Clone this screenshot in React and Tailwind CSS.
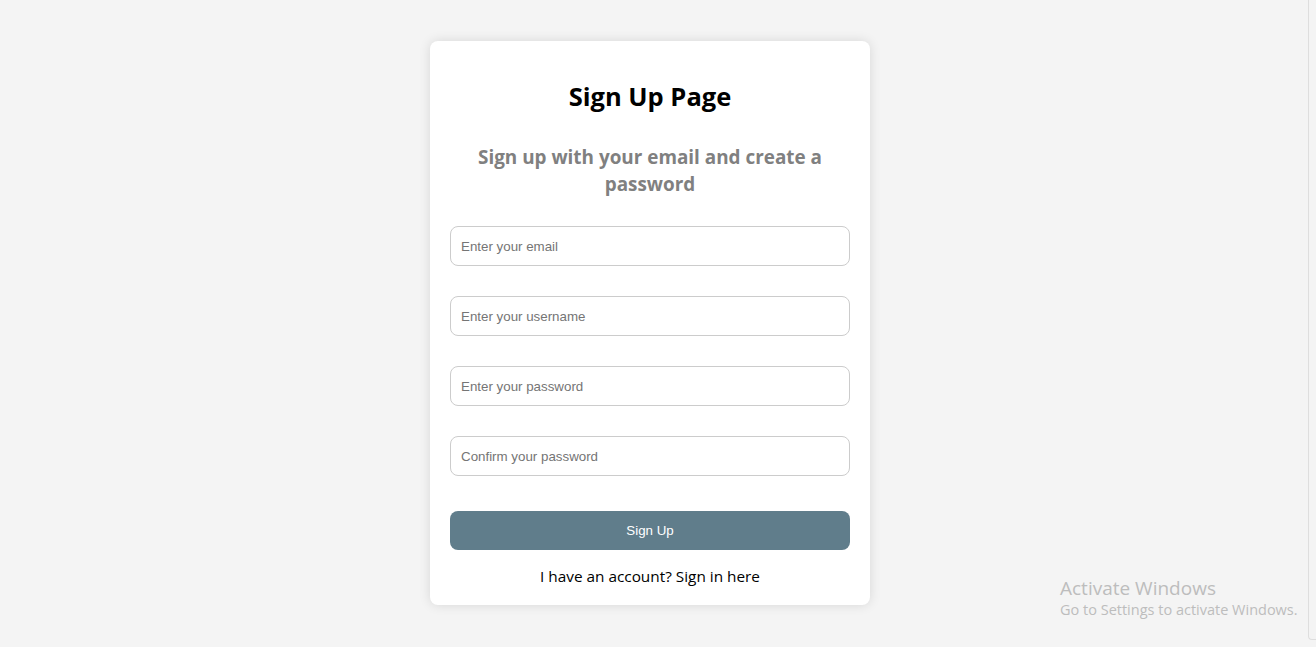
import React, { useState } from 'react';

const Field = ({ type, placeholder, value, onChange }) => (
  <input
    type={type}
    placeholder={placeholder}
    value={value}
    onChange={onChange}
    className="block w-full h-[40px] px-[10px] border border-[#cccccc] rounded-[8px] bg-white text-[13.33px] text-black placeholder:text-[#757575] outline-none font-['Liberation_Sans',Arial,sans-serif]"
  />
);

const App = () => {
  const [form, setForm] = useState({ email: '', username: '', password: '', confirm: '' });

  const update = (key) => (e) => setForm({ ...form, [key]: e.target.value });

  return (
    <div className="relative flex w-full h-[647px] bg-[#f4f4f4] overflow-hidden font-['Open_Sans',sans-serif]">
      <div className="flex-1 flex justify-center pt-[41px]">
        <div className="w-[440px] h-[564px] bg-white rounded-[8px] shadow-[0_0_12px_rgba(0,0,0,0.12)] px-[20px] pt-[20px] flex flex-col">
          <h2 className="mt-[19px] text-[25.5px] leading-[32px] font-bold text-black text-center">Sign Up Page</h2>
          <h3 className="mt-[32px] text-[18.9px] leading-[27px] font-bold text-[#808080] text-center px-[14px]">
            Sign up with your email and create a password
          </h3>
          <form className="mt-[28px] flex flex-col gap-[30px]" onSubmit={(e) => e.preventDefault()}>
            <Field type="email" placeholder="Enter your email" value={form.email} onChange={update('email')} />
            <Field type="text" placeholder="Enter your username" value={form.username} onChange={update('username')} />
            <Field type="password" placeholder="Enter your password" value={form.password} onChange={update('password')} />
            <Field type="password" placeholder="Confirm your password" value={form.confirm} onChange={update('confirm')} />
            <button
              type="submit"
              className="mt-[5px] h-[39px] w-full rounded-[8px] bg-[#607d8b] text-white text-[13.33px] font-['Liberation_Sans',Arial,sans-serif]"
            >
              Sign Up
            </button>
          </form>
          <p className="mt-[15px] text-[15.35px] leading-[22px] text-black text-center">I have an account? Sign in here</p>
        </div>
      </div>
      <div className="w-[16px] h-full pl-[8px]">
        <div className="w-[8px] h-[640px] border-l border-b border-[#dedede] rounded-bl-[4px]"></div>
      </div>

      {/* Windows activation watermark */}
      <div className="absolute left-[1060px] top-[576px] text-[#bdbdbd] pointer-events-none">
        <div className="text-[19px] leading-[24px]">Activate Windows</div>
        <div className="text-[14.5px] leading-[20px]">Go to Settings to activate Windows.</div>
      </div>
    </div>
  );
};

export default App;
